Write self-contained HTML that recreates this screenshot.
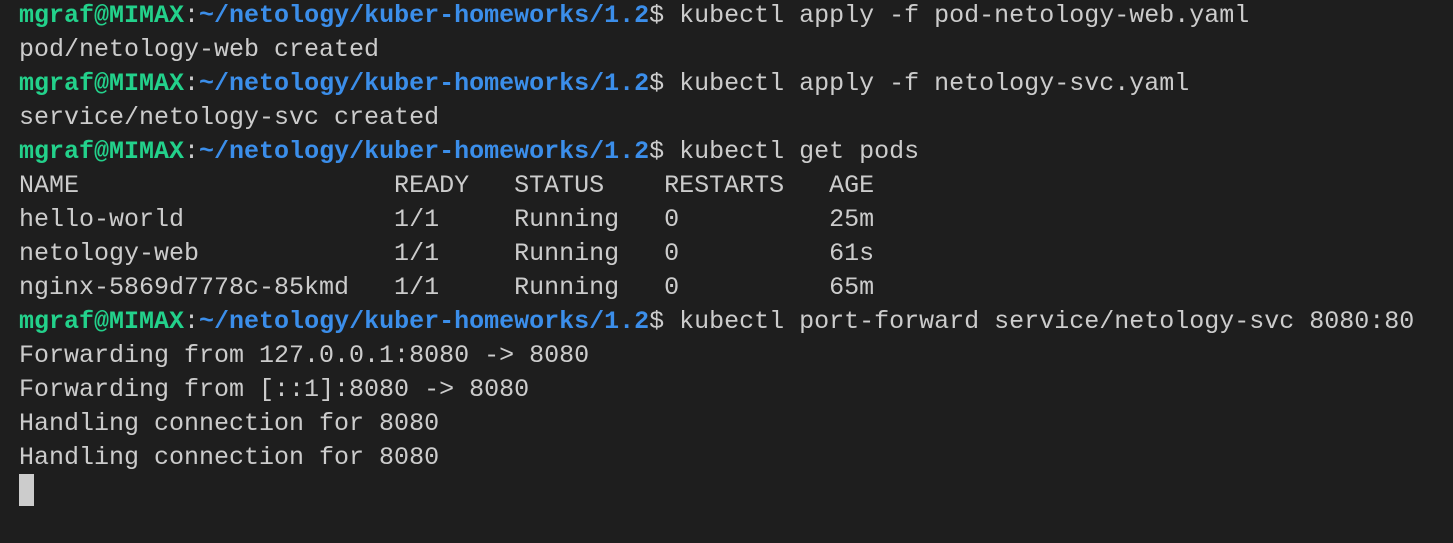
<!DOCTYPE html>
<html><head><meta charset="utf-8"><style>
html,body{margin:0;padding:0;background:#1e1e1e;width:1453px;height:543px;overflow:hidden}
pre{margin:0;position:absolute;left:19px;top:-1px;font-family:"Liberation Mono",monospace;font-size:25px;line-height:34px;color:#cccccc}
.g{color:#23d18b;font-weight:bold}
.b{color:#3b8eea;font-weight:bold}
.cur{display:inline-block;width:15px;height:32px;background:#cccccc;vertical-align:top;margin-top:-1px}
</style></head><body>
<pre><span class="g">mgraf@MIMAX</span>:<span class="b">~/netology/kuber-homeworks/1.2</span>$ kubectl apply -f pod-netology-web.yaml
pod/netology-web created
<span class="g">mgraf@MIMAX</span>:<span class="b">~/netology/kuber-homeworks/1.2</span>$ kubectl apply -f netology-svc.yaml
service/netology-svc created
<span class="g">mgraf@MIMAX</span>:<span class="b">~/netology/kuber-homeworks/1.2</span>$ kubectl get pods
NAME                     READY   STATUS    RESTARTS   AGE
hello-world              1/1     Running   0          25m
netology-web             1/1     Running   0          61s
nginx-5869d7778c-85kmd   1/1     Running   0          65m
<span class="g">mgraf@MIMAX</span>:<span class="b">~/netology/kuber-homeworks/1.2</span>$ kubectl port-forward service/netology-svc 8080:80
Forwarding from 127.0.0.1:8080 -> 8080
Forwarding from [::1]:8080 -> 8080
Handling connection for 8080
Handling connection for 8080
<span class="cur"></span></pre>
</body></html>
